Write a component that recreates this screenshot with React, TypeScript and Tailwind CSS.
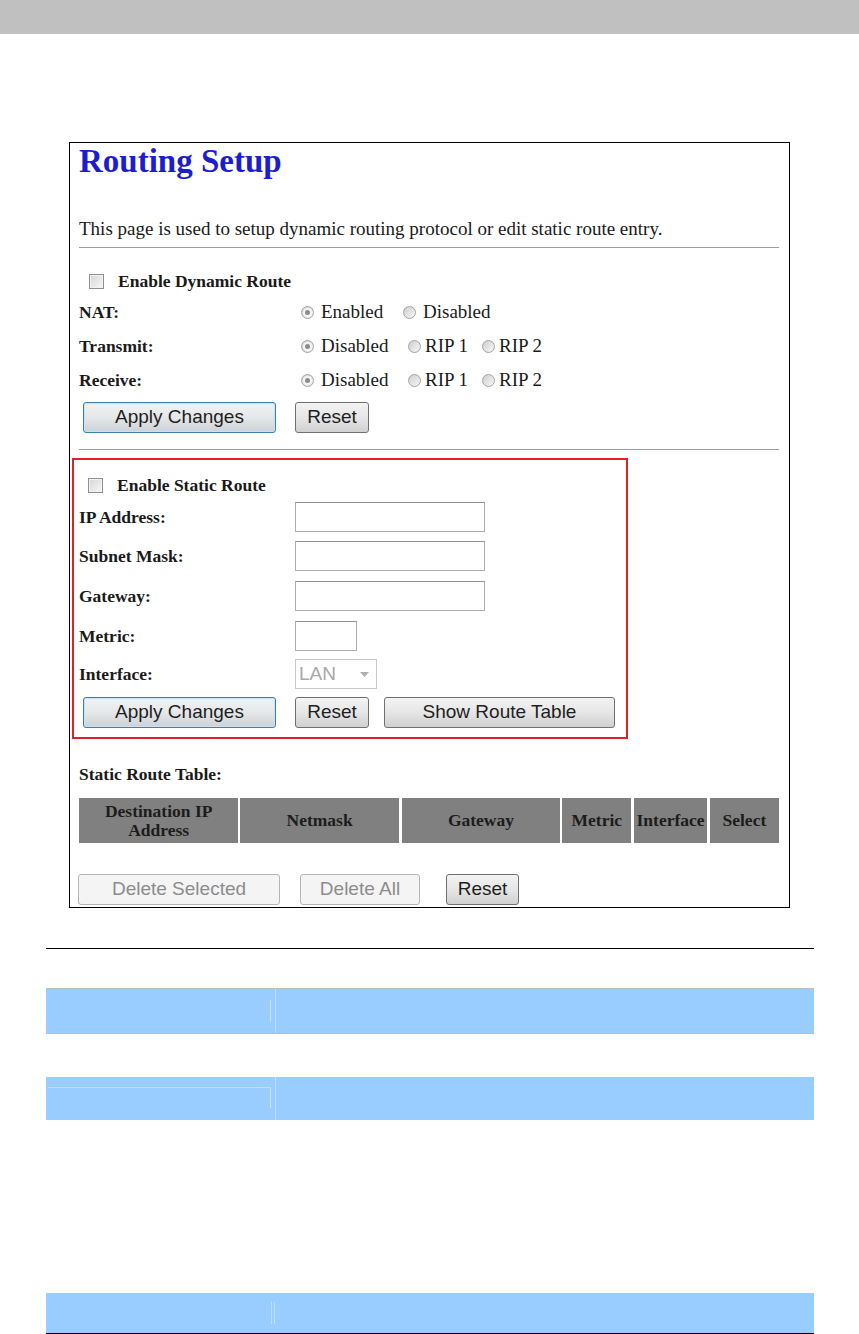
import React from 'react';

const serif = "font-['Liberation_Serif','Times_New_Roman',serif]";
const sans = "font-['Liberation_Sans',Arial,sans-serif]";

function Radio({ checked }: { checked?: boolean }) {
  return (
    <span className="inline-flex h-[13px] w-[13px] shrink-0 items-center justify-center rounded-full border border-[#a3a3a3] bg-linear-to-br from-[#cfcfcf] to-[#f6f6f6]">
      {checked && (
        <span className="flex h-[9px] w-[9px] items-center justify-center rounded-full bg-[#f4f4f4]">
          <span className="h-[5px] w-[5px] rounded-full bg-[#8c8c8c]" />
        </span>
      )}
    </span>
  );
}

function Checkbox() {
  return (
    <span className="inline-block h-[15px] w-[15px] shrink-0 border border-[#8e8f8f] bg-linear-to-br from-[#d6d6d6] to-[#f7f7f7] shadow-[inset_0_0_0_1px_#f2f2f2]" />
  );
}

function Button({
  children,
  width,
  primary,
  disabled,
}: {
  children: React.ReactNode;
  width: string;
  primary?: boolean;
  disabled?: boolean;
}) {
  let look =
    'border-[#707070] bg-linear-to-b from-[#f3f3f3] via-[#e6e6e6] to-[#d0d0d0] text-[#1e1e1e]';
  if (primary) {
    look =
      'border-[#3c7fb1] bg-linear-to-b from-[#f2f2f2] via-[#e5e7e9] to-[#cdd2d6] text-[#1e1e1e] shadow-[inset_0_0_0_1px_#c8e3f5]';
  }
  if (disabled) {
    look = 'border-[#b5b5b5] bg-[#f4f4f4] text-[#8c8c8c]';
  }
  return (
    <div
      className={`${width} ${look} ${sans} flex h-[31px] items-center justify-center rounded-[3px] border text-[19px]`}
    >
      {children}
    </div>
  );
}

function TextBox({ width }: { width: string }) {
  return (
    <div className={`${width} h-[30px] border border-[#abadb3] border-t-[#8e9096] bg-white`} />
  );
}

function Label({ children }: { children: React.ReactNode }) {
  return <div className="w-[216px] shrink-0 text-[17.5px] font-bold text-[#1a1a1a]">{children}</div>;
}

export default function App() {
  return (
    <div className={`${serif} relative h-[1334px] w-[859px] overflow-hidden bg-white`}>
      <div className="h-[34px] bg-[#c0c0c0]" />

      {/* screenshot box */}
      <div className="ml-[69px] mt-[108px] h-[766px] w-[721px] border border-black pl-[9px] pr-[10px]">
        <div className="mt-[1px] h-[34px] text-[33px] font-bold leading-[34px] text-[#1d1dd0]">
          Routing Setup
        </div>
        <div className="mt-[40px] h-[22px] text-[19px] leading-[22px] text-[#1a1a1a]">
          This page is used to setup dynamic routing protocol or edit static route entry.
        </div>
        <div className="mt-[7px] border-t border-[#9e9e9e]" />

        <div className="ml-[10px] mt-[23px] flex h-[20px] items-center">
          <Checkbox />
          <span className="ml-[14px] text-[17.5px] font-bold text-[#1a1a1a]">Enable Dynamic Route</span>
        </div>

        <div className="mt-[11px] flex h-[20px] items-center">
          <Label>NAT:</Label>
          <div className="ml-[6px] flex items-center text-[19px] text-[#1a1a1a]">
            <div className="flex w-[102px] items-center">
              <Radio checked />
              <span className="ml-[7px]">Enabled</span>
            </div>
            <div className="flex items-center">
              <Radio />
              <span className="ml-[7px]">Disabled</span>
            </div>
          </div>
        </div>
        {['Transmit:', 'Receive:'].map((l) => (
          <div key={l} className="mt-[14px] flex h-[20px] items-center">
            <Label>{l}</Label>
            <div className="ml-[6px] flex items-center text-[19px] text-[#1a1a1a]">
              <div className="flex w-[107px] items-center">
                <Radio checked />
                <span className="ml-[7px]">Disabled</span>
              </div>
              <div className="flex w-[74px] items-center">
                <Radio />
                <span className="ml-[4px]">RIP 1</span>
              </div>
              <div className="flex items-center">
                <Radio />
                <span className="ml-[4px]">RIP 2</span>
              </div>
            </div>
          </div>
        ))}

        <div className="ml-[4px] mt-[12px] flex">
          <Button width="w-[193px]" primary>
            Apply Changes
          </Button>
          <Button width="ml-[19px] w-[74px]">Reset</Button>
        </div>
        <div className="mt-[16px] border-t border-[#9e9e9e]" />

        {/* static route section */}
        <div className="-ml-[7px] mt-[8px] h-[281px] w-[556px] border-2 border-[#e2202a] pl-[5px]">
          <div className="ml-[9px] mt-[15px] flex h-[20px] items-center">
            <Checkbox />
            <span className="ml-[14px] text-[17.5px] font-bold text-[#1a1a1a]">Enable Static Route</span>
          </div>
          <div className="mt-[7px] flex h-[30px] items-center">
            <Label>IP Address:</Label>
            <TextBox width="w-[190px]" />
          </div>
          <div className="mt-[9px] flex h-[30px] items-center">
            <Label>Subnet Mask:</Label>
            <TextBox width="w-[190px]" />
          </div>
          <div className="mt-[10px] flex h-[30px] items-center">
            <Label>Gateway:</Label>
            <TextBox width="w-[190px]" />
          </div>
          <div className="mt-[10px] flex h-[30px] items-center">
            <Label>Metric:</Label>
            <TextBox width="w-[62px]" />
          </div>
          <div className="mt-[8px] flex h-[30px] items-center">
            <Label>Interface:</Label>
            <div className={`${sans} flex h-[30px] w-[82px] items-center border border-[#c9c9c9] bg-white pl-[3px] text-[19px] text-[#a8a8a8]`}>
              <span>LAN</span>
              <svg className="ml-[24px]" width="9" height="5" viewBox="0 0 9 5">
                <path d="M0 0 L9 0 L4.5 5 Z" fill="#b0b0b0" />
              </svg>
            </div>
          </div>
          <div className="ml-[4px] mt-[8px] flex">
            <Button width="w-[193px]" primary>
              Apply Changes
            </Button>
            <Button width="ml-[19px] w-[74px]">Reset</Button>
            <Button width="ml-[15px] w-[231px]">Show Route Table</Button>
          </div>
        </div>

        <div className="mt-[25px] flex h-[20px] items-center text-[17.5px] font-bold text-[#1a1a1a]">
          Static Route Table:
        </div>
        <div className="mt-[14px] flex h-[45px] text-[17.5px] font-bold leading-[19px] text-[#1c1c1c]">
          <div className="flex w-[161px] items-center justify-center bg-[#808080] text-center">
            Destination IP
            <br />
            Address
          </div>
          <div className="ml-[2px] flex w-[160px] items-center justify-center bg-[#808080]">Netmask</div>
          <div className="ml-[3px] flex w-[160px] items-center justify-center bg-[#808080]">Gateway</div>
          <div className="ml-[2px] flex w-[70px] items-center justify-center bg-[#808080]">Metric</div>
          <div className="ml-[3px] flex w-[73px] items-center justify-center bg-[#808080]">Interface</div>
          <div className="ml-[3px] flex w-[70px] items-center justify-center bg-[#808080]">Select</div>
        </div>
        <div className="-ml-[1px] mt-[31px] flex">
          <Button width="w-[202px]" disabled>
            Delete Selected
          </Button>
          <Button width="ml-[20px] w-[120px]" disabled>
            Delete All
          </Button>
          <Button width="ml-[26px] w-[73px]">Reset</Button>
        </div>
      </div>

      {/* manual page rule and parameter rows */}
      <div className="ml-[46px] mt-[40px] h-px w-[768px] bg-black" />
      <div className="ml-[46px] mt-[39px] flex h-[46px] w-[768px] border-y border-[#bcbcbc] bg-[#99ccff]">
        <div className="flex w-[230px] justify-end border-r border-[#c2defc] py-[11px] pr-[4px]">
          <div className="w-px bg-[#c2defc]" />
        </div>
      </div>
      <div className="ml-[46px] mt-[43px] flex h-[43px] w-[768px] bg-[#99ccff]">
        <div className="w-[230px] border-r border-[#c2defc] pl-[2px] pr-[4px] pt-[10px]">
          <div className="h-[21px] border-r border-t border-[#c2defc]" />
        </div>
      </div>
      <div className="ml-[46px] mt-[173px] flex h-[40px] w-[768px] bg-[#99ccff]">
        <div className="flex w-[230px] justify-end py-[9px] pr-[1px]">
          <div className="w-px bg-[#c2defc]" />
          <div className="ml-[2px] w-px bg-[#c2defc]" />
        </div>
      </div>
      <div className="ml-[46px] h-[2px] w-[768px] bg-black" />
    </div>
  );
}
